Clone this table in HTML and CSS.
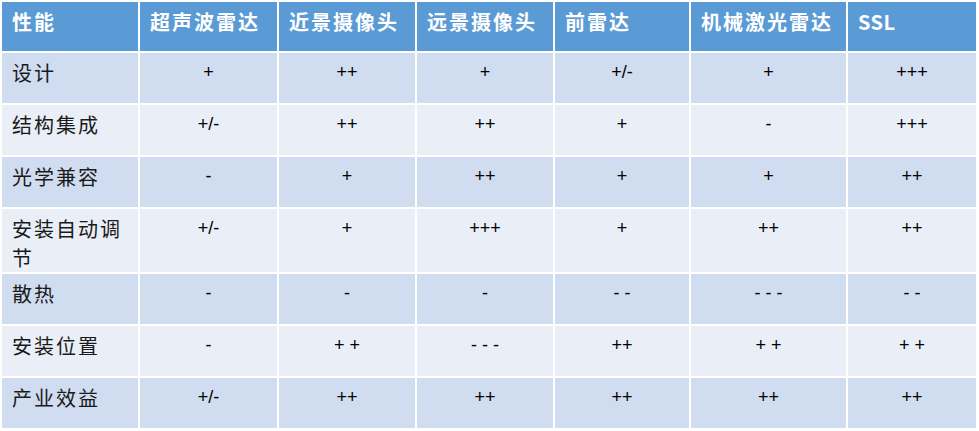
FILE: index.html
```html
<!DOCTYPE html>
<html lang="zh-CN">
<head>
<meta charset="utf-8">
<title>性能对比</title>
<link rel="stylesheet" href="styles.css">
</head>
<body>
<table class="cmp">
  <colgroup>
    <col class="c1"><col class="c2"><col class="c3"><col class="c4"><col class="c5"><col class="c6"><col class="c7">
  </colgroup>
  <thead>
    <tr class="head">
      <th>性能</th><th>超声波雷达</th><th>近景摄像头</th><th>远景摄像头</th><th>前雷达</th><th>机械激光雷达</th><th class="latin">SSL</th>
    </tr>
  </thead>
  <tbody>
    <tr class="odd"><td class="lbl">设计</td><td>+</td><td>++</td><td>+</td><td>+/-</td><td>+</td><td>+++</td></tr>
    <tr class="even"><td class="lbl">结构集成</td><td>+/-</td><td>++</td><td>++</td><td>+</td><td>-</td><td>+++</td></tr>
    <tr class="odd"><td class="lbl">光学兼容</td><td>-</td><td>+</td><td>++</td><td>+</td><td>+</td><td>++</td></tr>
    <tr class="even"><td class="lbl">安装自动调节</td><td>+/-</td><td>+</td><td>+++</td><td>+</td><td>++</td><td>++</td></tr>
    <tr class="odd"><td class="lbl">散热</td><td>-</td><td>-</td><td>-</td><td>- -</td><td>- - -</td><td>- -</td></tr>
    <tr class="even"><td class="lbl">安装位置</td><td>-</td><td>+ +</td><td>- - -</td><td>++</td><td>+ +</td><td>+ +</td></tr>
    <tr class="odd"><td class="lbl">产业效益</td><td>+/-</td><td>++</td><td>++</td><td>++</td><td>++</td><td>++</td></tr>
  </tbody>
</table>
</body>
</html>
```
FILE: styles.css
```css
html, body {
  margin: 0;
  padding: 0;
  background: #ffffff;
}

.cmp {
  border-collapse: collapse;
  table-layout: fixed;
  width: 976px;
  font-family: "Noto Sans CJK SC", "Noto Sans", sans-serif;
}

.c1 { width: 138px; }
.c2 { width: 139px; }
.c3 { width: 138px; }
.c4 { width: 138px; }
.c5 { width: 136px; }
.c6 { width: 157px; }
.c7 { width: 130px; }

.cmp th,
.cmp td {
  border: 2px solid #ffffff;
  vertical-align: top;
  padding: 5px 10px 0 10px;
  line-height: 29px;
}

.head th {
  height: 44px;
  background: #5b9bd5;
  color: #ffffff;
  font-weight: 700;
  font-size: 20px;
  letter-spacing: 2px;
  text-align: left;
}

.head th.latin {
  letter-spacing: 0.5px;
}

.cmp td {
  height: 45px;
  color: #000000;
  text-align: center;
  font-family: "Liberation Sans", Arial, sans-serif;
  font-size: 18px;
}

.cmp td.lbl {
  text-align: left;
  font-family: "Noto Sans CJK SC", "Noto Sans", sans-serif;
  font-size: 20px;
  letter-spacing: 2px;
  color: #1a1a1a;
}

.odd td { background: #d0dcef; }
.even td { background: #e9eef7; }
```
